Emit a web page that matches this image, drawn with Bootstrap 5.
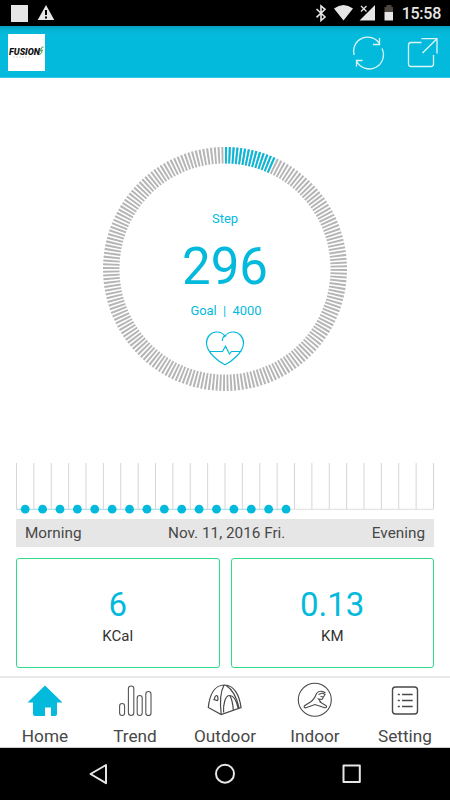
<!DOCTYPE html>
<html lang="en">
<head>
<meta charset="utf-8">
<meta name="viewport" content="width=device-width, initial-scale=1">
<title>Fusion</title>
<link rel="stylesheet" href="https://cdn.jsdelivr.net/npm/bootstrap@5.3.0/dist/css/bootstrap.min.css">
<style>
:root{--accent:#04badc}
body{font-family:Roboto,sans-serif;width:450px;height:800px;line-height:1;color:#484848;overflow:hidden}
body>*{flex-shrink:0}
svg{display:block;flex:none}
.accent{color:var(--accent)}
.status{height:26px;padding:0 9px 0 11px;color:#e6e6e6}
.clock{font-size:16px;font-weight:500;margin-left:9px;padding-top:1px;letter-spacing:-.25px}
.topbar{height:52px;padding:3px 11px 0 8px;background:linear-gradient(#06a0be,#05b3d3 4px,#04badc 9px);border-bottom:1px solid #36c8e3}
.logo{width:37px;height:37px;margin-top:-1px}
.dial{height:244px;margin-top:69px}
.dial-text{padding-top:65px}
.step{font-size:13px;line-height:14px}
.count{font-size:51px;line-height:52px;margin-top:15px}
.goal{font-size:12.9px;line-height:14px;margin-top:11px;padding-left:2px;white-space:pre}
.heart{margin-top:12px}
.chart{margin:71px 0 0 15px}
.daybar{height:28px;margin:4px 16px 0;padding:2px 9px 0;background:#e6e6e6;font-size:15.3px}
.stats{margin:11px 16px 0;gap:11px}
.stat{height:110px;border:1.5px solid #2edb89;border-radius:3px;padding-top:28px}
.stat-value{font-size:33px;line-height:36px}
.stat-unit{font-size:15px;line-height:18px;margin-top:4px;color:#333}
.tabs{height:72px;margin-top:8px;border-top:2px solid #e9e9e9;border-bottom:1px solid #ccc;font-size:17.2px}
.tab{width:90px;padding-top:4px;color:#484848;text-decoration:none}
.tab span{line-height:20px;margin-top:8px}
.sysnav{height:52px}
</style>
<script src="https://cdn.jsdelivr.net/npm/bootstrap@5.3.0/dist/js/bootstrap.bundle.min.js"></script>
</head>
<body class="bg-white d-flex flex-column">
<div class="status bg-black d-flex align-items-center">
  <svg width="50" height="26" fill="#e6e6e6"><path d="M0 5h17v17H0zM35 5 43.300 20H26.700z"/><path d="M34 10h2v5h-2zM34 16.500h2v2h-2z" fill="#000"/></svg>
  <svg class="ms-auto" width="80" height="26" viewBox="313 0 80 26" fill="#e6e6e6">
    <path d="m316.500 9 8.500 8-4 3.500V6l4 3.300-8.500 8" fill="none" stroke="#e6e6e6" stroke-width="1.600"/>
    <path d="M334 8.500Q343.500 1.500 353 8.500L343.500 20.500zM375 5v15.500h-15.500z"/>
    <path d="M359 4h9v8h-9z" fill="#000"/><path d="m361 6 5.500 5.500m0-5.500-5.500 5.500" stroke="#e6e6e6" stroke-width="1.200"/>
    <path d="M384.500 7h2V5h5v2h2.500v5h-9.500z" fill="#4c4743"/><path d="M384.500 12h9.500v8.500h-9.500z"/>
  </svg>
  <span class="clock">15:58</span>
</div>
<header class="topbar d-flex align-items-center">
  <svg class="logo" viewBox="0 0 37 37"><path fill="#fff" d="M0 0h37v37H0z"/><text x="1" y="21.300" font-family="Roboto" font-weight="900" font-style="italic" font-size="9.600" textLength="31" lengthAdjust="spacingAndGlyphs" fill="#111">FUSION</text><path d="M31 20.500c4-1 3-3.500 1.700-4.500l1.500-3h1.300M32 17l3-1" fill="none" stroke="#3b9b38"/><path d="M5 23h18" stroke="#bbb" stroke-width=".6" stroke-dasharray="2 1"/></svg>
  <svg class="ms-auto" width="86" height="40" viewBox="353 33 86 40" fill="none" stroke="#dcf6fa" stroke-width="1.300">
    <path d="M354.200 55A14 14 0 0 1 380 44.500M379.500 38v6.500H373M382 48.500A14 14 0 0 1 356.500 61M356.500 66.500V60.500h6"/>
    <path d="M421.500 42.500H411q-2.500 0-2.500 2.500v19q0 2.500 2.500 2.500h20q2.500 0 2.500-2.500V55M422.500 53 437 38.700M421.500 38.700H437V53.500"/>
  </svg>
</header>
<main>
  <section class="dial position-relative">
    <svg class="position-absolute top-0 start-50 translate-middle-x" width="244" height="244" viewBox="-122 -122 244 244" fill="none" stroke-width="16.500">
      <circle r="113.750" pathLength="2000" stroke="#b5b5b5" stroke-dasharray="5.500 4.500" transform="rotate(-90)"/>
      <path d="M0-113.750A113.750 113.750 0 0 1 48.432-102.924" pathLength="140" stroke="#04badc" stroke-dasharray="5.500 4.500"/>
    </svg>
    <div class="dial-text accent d-flex flex-column align-items-center">
      <div class="step">Step</div>
      <div class="count">296</div>
      <div class="goal">Goal  |  4000</div>
      <svg class="heart" width="40" height="37" viewBox="205 330 40 37" fill="none" stroke="#04badc" stroke-width="1.200"><path d="M225 364.800C220 362.500 206.500 353 206.500 343c0-6 4.500-11 10-11 4 0 7 1.500 8.500 4.500 1.500-3 5-4.500 8.500-4.500 5.500 0 10 5 10 11 0 10-13.500 19.500-18.500 21.800zM225 335q-2.800 2.500-2.800 6M209.500 351.500h13l3-5.200 4 7.700 2-2.500h10"/></svg>
    </div>
  </section>
  <svg class="chart" width="420" height="53" viewBox="15 462 420 53" id="chart"></svg>
  <div class="daybar d-flex align-items-center justify-content-between"><span>Morning</span><span>Nov. 11, 2016 Fri.</span><span>Evening</span></div>
  <section class="stats d-flex text-center">
    <div class="stat flex-fill w-50"><div class="stat-value accent">6</div><div class="stat-unit">KCal</div></div>
    <div class="stat flex-fill w-50"><div class="stat-value accent">0.13</div><div class="stat-unit">KM</div></div>
  </section>
</main>
<nav class="tabs d-flex">
  <a class="tab d-flex flex-column align-items-center" href="#"><svg width="40" height="36" viewBox="25 682 40 36" fill="#04badc"><path d="m45 685.500 17.500 17H57V714q0 2-2 2h-4v-8.500h-6v8.500h-10q-2 0-2-2v-11.500h-5.500z"/></svg><span>Home</span></a>
  <a class="tab d-flex flex-column align-items-center" href="#"><svg width="40" height="36" viewBox="115 682 40 36" fill="none" stroke="#555" stroke-width="1.100"><rect x="119.600" y="703.500" width="5" height="12" rx="2.500"/><rect x="128.400" y="686" width="5.400" height="29.500" rx="2.700"/><rect x="137.200" y="695.500" width="5" height="20" rx="2.500"/><rect x="145.800" y="691.500" width="5.200" height="24" rx="2.600"/></svg><span>Trend</span></a>
  <a class="tab d-flex flex-column align-items-center" href="#"><svg width="40" height="36" viewBox="205 682 40 36" fill="none" stroke="#484848" stroke-width="1.200"><path d="M208.300 707.500C209.500 696 214 685 224.500 685c9.500 0 15 10 16.500 22.500l-19.800 7zM224 685.300c-4.500 8-4 19-2.800 29M226 685.300c6 4 10.500 11 13 22.500M223.600 712.500c-.5-8 1.500-17 6-17 4 0 7 6 8.500 12.500"/><path d="M230 695.700c2 4 3 9 3.300 14.300M214.500 698.500q1-4 3-2.500 1 3 0 4.500l-3.500-1z"/></svg><span>Outdoor</span></a>
  <a class="tab d-flex flex-column align-items-center" href="#"><svg width="40" height="36" viewBox="295 682 40 36" fill="none" stroke="#484848" stroke-width="1.100"><circle cx="314.800" cy="699.800" r="16.500"/><path d="M325.500 693c-2.500-2.500-7-2.500-9 .5-1.500 4-3 6.500-6 8.500l-6 3.700c-1 1.300 0 2.500 1.500 2.100l9-3.300 9.700 3.200c2 .5 2.500-1.200 1-2.200l-5.700-3.500-.5-2.500M318.500 694.500l4-1.500 2.500 1.500-1.500 2.500-3-.5M323.500 697l-1.500 2.500-3.500-.5 2.500 3"/></svg><span>Indoor</span></a>
  <a class="tab d-flex flex-column align-items-center" href="#"><svg width="40" height="36" viewBox="385 682 40 36" fill="none" stroke="#484848" stroke-width="1.400"><rect x="392.500" y="687" width="25" height="27" rx="3"/><path d="M402 694.500h10.700M402 700.500h10.700M402 706.500h10.700M397.800 694.500h2M397.800 700.500h2M397.800 706.500h2"/></svg><span>Setting</span></a>
</nav>
<footer class="sysnav bg-black">
  <svg width="450" height="52" viewBox="0 748 450 52" fill="none" stroke="#e6e6e6" stroke-width="2" stroke-linejoin="round"><path d="M106 765v18.200L90.500 774z"/><circle cx="225" cy="773.700" r="9"/><rect x="343.500" y="765.500" width="16.300" height="16.500"/></svg>
</footer>
<script>
// 24 hourly columns; readings exist for the first 16 hours
const step = 17.375, left = 16.5, base = 509.3;
let out = '';
for (let i = 0; i < 25; i++) {
  const x = left + i * step;
  out += `<path d="M${x} 463V${base}" stroke="#d6d6d6"/>`;
}
out += `<path d="M${left} ${base}H433.500" stroke="#dedede"/><path d="M${left} ${base}H286" stroke="#a5e0ec"/>`;
for (let i = 0; i < 16; i++) out += `<circle cx="${25.2 + i * 17.39}" cy="509.200" r="4.400" fill="#04badc"/>`;
document.getElementById('chart').innerHTML = out;
</script>
</body>
</html>
